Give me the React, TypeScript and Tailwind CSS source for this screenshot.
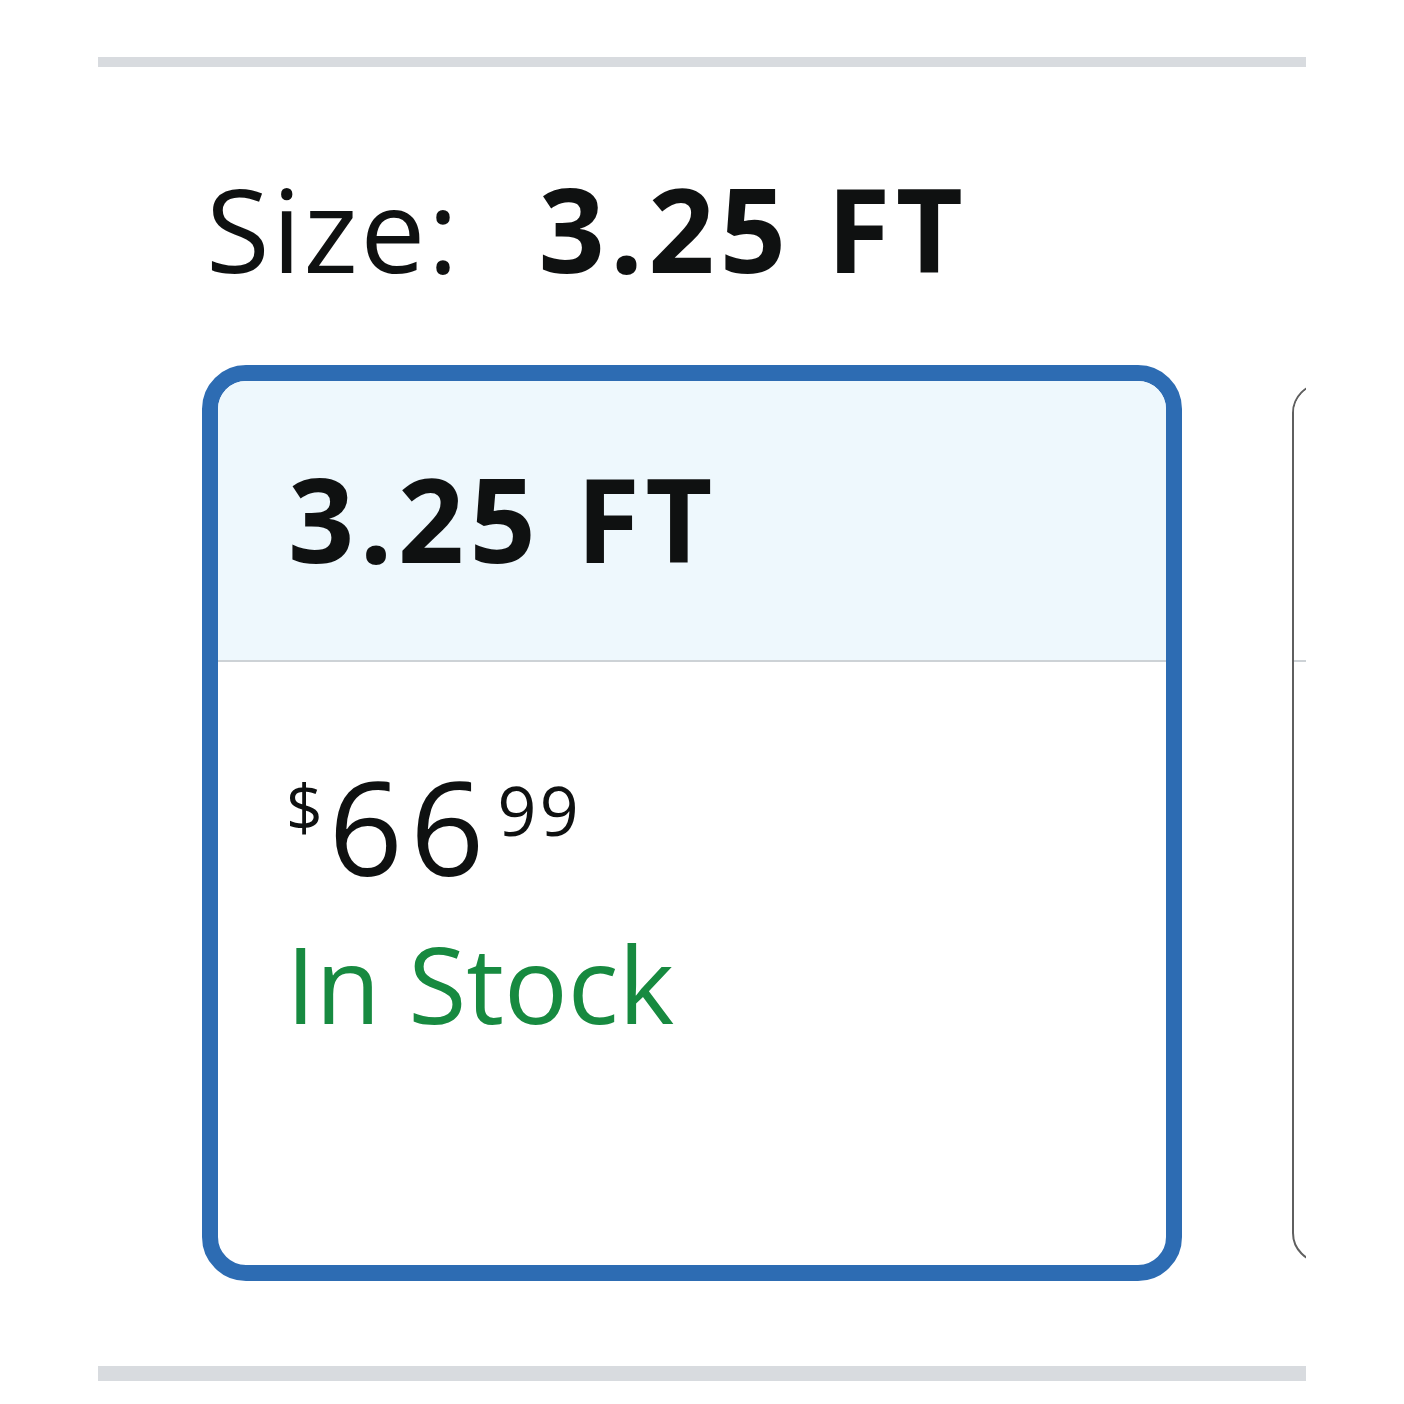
import React from 'react';

const font = { fontFamily: '"Open Sans", "Noto Sans", Arial, sans-serif' };

export default function App() {
  return (
    <div className="min-h-screen bg-white text-[#0f1111]" style={font}>
      <div className="ml-[98px] w-[1208px] overflow-hidden">
        {/* top rule */}
        <div className="mt-[57px] h-[10px] bg-[#d8dbdf]" />

        {/* Size label */}
        <div className="mt-[103px] flex items-baseline pl-[108px] text-[116px] leading-none">
          <span className="font-normal tracking-[0.02em]">Size:</span>
          <span className="ml-[78px] font-bold tracking-[0.045em]">3.25 FT</span>
        </div>

        {/* Options */}
        <div className="mt-[79px] flex items-center gap-[110px] pl-[104px]">
          {/* selected card */}
          <div className="flex h-[916px] w-[980px] shrink-0 flex-col overflow-hidden rounded-[44px] border-[16px] border-[#2d6cb3] bg-white">
            <div className="h-[281px] shrink-0 border-b-2 border-[#cdd2d6] bg-[#eef8fd] pl-[70px] pt-[79px]">
              <span className="text-[116px] font-bold leading-none tracking-[0.045em]">3.25 FT</span>
            </div>
            <div className="flex flex-col pl-[68px] pt-[99px]">
              <div className="flex items-start leading-none">
                <span className="mt-[14px] text-[64px]">$</span>
                <span className="ml-[6px] text-[130px] tracking-[0.055em]">66</span>
                <span className="ml-[6px] mt-[15px] text-[68px] tracking-[0.05em]">99</span>
              </div>
              <div className="mt-[39px] text-[106px] leading-none text-[#178a40]">In Stock</div>
            </div>
          </div>

          {/* next card (cut off) */}
          <div className="flex h-[880px] w-[980px] shrink-0 flex-col overflow-hidden rounded-[30px] border-2 border-[#5f5f5f] bg-white">
            <div className="h-[277px] shrink-0 border-b-2 border-[#cdd2d6] bg-white" />
          </div>
        </div>

        {/* bottom rule */}
        <div className="mt-[85px] h-[15px] bg-[#d8dbdf]" />
      </div>
    </div>
  );
}
